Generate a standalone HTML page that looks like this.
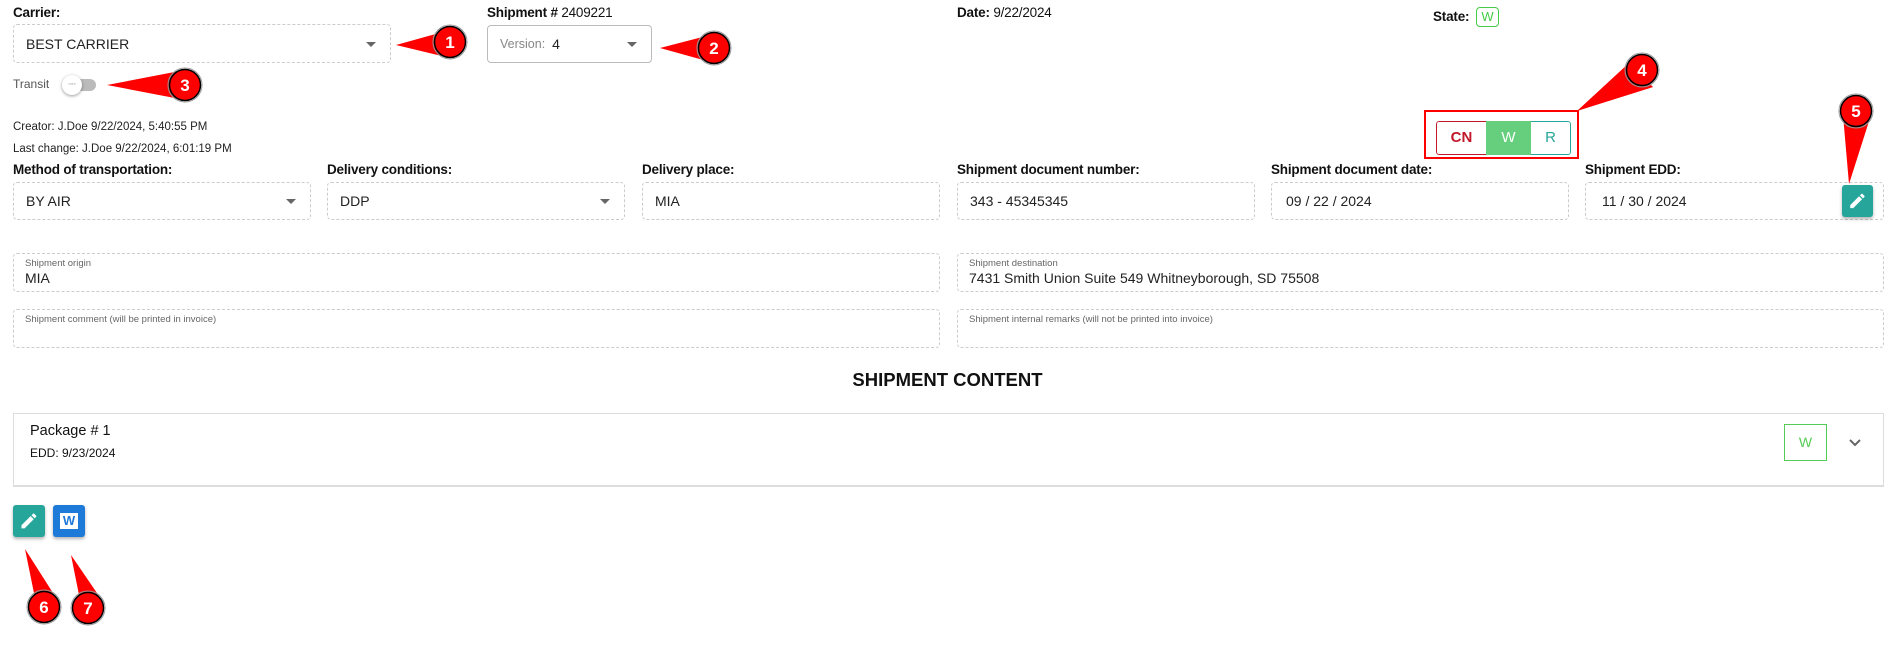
<!DOCTYPE html>
<html><head><meta charset="utf-8"><style>
*{box-sizing:border-box;margin:0;padding:0}
body{width:1899px;height:663px;background:#fff;font-family:"Liberation Sans",Arial,sans-serif;color:#222;position:relative;overflow:hidden}
.a{position:absolute}
.lbl{font-size:13.5px;font-weight:bold;color:#111;white-space:nowrap;letter-spacing:-0.2px}
.f{position:absolute;border:1px dashed #ccc;border-radius:4px;font-size:14px;color:#222;display:flex;align-items:center;padding-left:12px}
.car{position:absolute;right:14px;top:50%;margin-top:-2px;border-left:5px solid transparent;border-right:5px solid transparent;border-top:5px solid #666}
.small{font-size:11.5px;color:#222;white-space:nowrap}
.ff{position:absolute;border:1px dashed #ccc;border-radius:4px;padding:4px 11px}
.ff .t{font-size:9.5px;color:#666}
.ff .v{font-size:14px;color:#222;margin-top:1px}
</style></head><body>

<div class="a lbl" style="left:13px;top:5px">Carrier:</div>
<div class="f" style="left:13px;top:24px;width:378px;height:39px">BEST CARRIER<span class="car"></span></div>

<div class="a lbl" style="left:487px;top:5px">Shipment # <span style="font-weight:normal">2409221</span></div>
<div class="f" style="left:487px;top:25px;width:165px;height:38px;border:1px solid #bbb"><span style="font-size:12.5px;color:#888;margin-right:7px">Version:</span>4<span class="car"></span></div>

<div class="a lbl" style="left:957px;top:5px">Date: <span style="font-weight:normal">9/22/2024</span></div>
<div class="a lbl" style="left:1433px;top:9px">State:</div>
<div class="a" style="left:1476px;top:7px;width:23px;height:20px;border:1px solid #4c4;border-radius:4px;color:#4c4;font-size:13px;text-align:center;line-height:18px">W</div>

<div class="a" style="left:13px;top:77px;font-size:12px;color:#555">Transit</div>
<div class="a" style="left:66px;top:79px;width:30px;height:12px;border-radius:6px;background:#bbb"></div>
<div class="a" style="left:62px;top:75px;width:20px;height:20px;border-radius:50%;background:#fff;box-shadow:0 1px 3px rgba(0,0,0,.4);font-size:7px;color:#888;text-align:center;line-height:20px">◦◦◦</div>

<div class="a small" style="left:13px;top:121px">Creator: J.Doe 9/22/2024, 5:40:55 PM</div>
<div class="a small" style="left:13px;top:143px">Last change: J.Doe 9/22/2024, 6:01:19 PM</div>

<div class="a" style="left:1424px;top:110px;width:155px;height:49px;border:2px solid #f00"></div>
<div class="a" style="left:1436px;top:121px;width:135px;height:34px;border-radius:3px;display:flex;font-size:15px;font-weight:bold;overflow:hidden">
 <div style="width:50px;border:1px solid #c0182a;border-right:none;border-radius:3px 0 0 3px;color:#c0182a;text-align:center;line-height:32px">CN</div>
 <div style="width:45px;background:#66cf7e;color:#fff;text-align:center;line-height:34px;font-weight:normal">W</div>
 <div style="width:40px;border:1px solid #26a69a;border-left:none;border-radius:0 3px 3px 0;color:#26a69a;text-align:center;line-height:32px;font-weight:normal">R</div>
</div>

<div class="a lbl" style="left:13px;top:162px">Method of transportation:</div>
<div class="a lbl" style="left:327px;top:162px">Delivery conditions:</div>
<div class="a lbl" style="left:642px;top:162px">Delivery place:</div>
<div class="a lbl" style="left:957px;top:162px">Shipment document number:</div>
<div class="a lbl" style="left:1271px;top:162px">Shipment document date:</div>
<div class="a lbl" style="left:1585px;top:162px">Shipment EDD:</div>

<div class="f" style="left:13px;top:182px;width:298px;height:38px">BY AIR<span class="car"></span></div>
<div class="f" style="left:327px;top:182px;width:298px;height:38px">DDP<span class="car"></span></div>
<div class="f" style="left:642px;top:182px;width:298px;height:38px">MIA</div>
<div class="f" style="left:957px;top:182px;width:298px;height:38px">343 - 45345345</div>
<div class="f" style="left:1271px;top:182px;width:298px;height:38px;padding-left:14px">09 / 22 / 2024</div>
<div class="f" style="left:1585px;top:182px;width:299px;height:38px;padding-left:16px">11 / 30 / 2024</div>
<div class="a" style="left:1842px;top:185px;width:31px;height:32px;background:#26a69a;border-radius:3px;box-shadow:0 2px 3px rgba(0,0,0,.3)">
<svg width="31" height="32" viewBox="0 0 24 24"><path transform="translate(4.5,4.5) scale(0.62)" d="M3 17.25V21h3.75L17.81 9.94l-3.75-3.75L3 17.25zM20.71 7.04a1 1 0 0 0 0-1.41l-2.34-2.34a1 1 0 0 0-1.41 0l-1.830 1.83 3.75 3.75 1.83-1.83z" fill="#fff"/></svg></div>

<div class="ff" style="left:13px;top:253px;width:927px;height:39px"><div class="t">Shipment origin</div><div class="v">MIA</div></div>
<div class="ff" style="left:957px;top:253px;width:927px;height:39px"><div class="t">Shipment destination</div><div class="v">7431 Smith Union Suite 549 Whitneyborough, SD 75508</div></div>
<div class="ff" style="left:13px;top:309px;width:927px;height:39px"><div class="t">Shipment comment (will be printed in invoice)</div></div>
<div class="ff" style="left:957px;top:309px;width:927px;height:39px"><div class="t">Shipment internal remarks (will not be printed into invoice)</div></div>

<div class="a" style="left:0;width:1899px;top:369px;text-align:center;font-size:18.5px;font-weight:bold;color:#111;margin-left:-2px">SHIPMENT CONTENT</div>

<div class="a" style="left:13px;top:413px;width:1871px;height:74px;border:1px solid #ddd;border-bottom:2px solid #ddd"></div>
<div class="a" style="left:30px;top:423px;font-size:14.5px;color:#111">Package # 1</div>
<div class="a" style="left:30px;top:446px;font-size:12px;color:#111">EDD: 9/23/2024</div>
<div class="a" style="left:1784px;top:424px;width:43px;height:37px;border:1px solid #5c5;color:#5c5;font-size:14px;text-align:center;line-height:35px">W</div>
<svg class="a" style="left:1847px;top:434px" width="16" height="16" viewBox="0 0 16 16"><path d="M3 6l5 5 5-5" stroke="#666" stroke-width="2" fill="none"/></svg>

<div class="a" style="left:13px;top:505px;width:32px;height:32px;background:#26a69a;border-radius:3px;box-shadow:0 2px 3px rgba(0,0,0,.3)">
<svg width="32" height="32" viewBox="0 0 24 24"><path transform="translate(4.5,4.5) scale(0.62)" d="M3 17.25V21h3.75L17.81 9.94l-3.75-3.75L3 17.25zM20.71 7.04a1 1 0 0 0 0-1.41l-2.34-2.34a1 1 0 0 0-1.41 0l-1.83 1.83 3.75 3.75 1.83-1.83z" fill="#fff"/></svg></div>
<div class="a" style="left:53px;top:505px;width:32px;height:32px;background:#1e7ad8;border-radius:3px;box-shadow:0 2px 3px rgba(0,0,0,.3)">
<div style="position:absolute;left:7px;top:8px;width:18px;height:16px;background:#fff;color:#1e7ad8;font-weight:bold;font-size:13px;text-align:center;line-height:16px">W</div></div>

<svg class="a" style="left:0;top:0" width="1899" height="663">
<g fill="#f00">
<polygon points="396,45 450,30 450,58"/>
<polygon points="660,48 714,34 714,63"/>
<polygon points="107,85 185,70 185,100"/>
<polygon points="1577,111 1629,63 1653,87"/>
<polygon points="1849,184 1843,115 1871,115"/>
<polygon points="25,549 36,603 53,593"/>
<polygon points="71,555 80,600 99,596"/>
</g>
<g font-family="Liberation Sans,Arial,sans-serif" font-weight="bold" font-size="17" fill="#fff" text-anchor="middle">
<g><circle cx="450" cy="42" r="15.5" fill="#f00" stroke="#000" stroke-width="1.5"/><circle cx="450" cy="42" r="17" fill="none" stroke="#999" stroke-width="1"/><text x="450" y="48">1</text></g>
<g><circle cx="714" cy="48" r="15.5" fill="#f00" stroke="#000" stroke-width="1.5"/><circle cx="714" cy="48" r="17" fill="none" stroke="#999" stroke-width="1"/><text x="714" y="54">2</text></g>
<g><circle cx="185" cy="85" r="15.5" fill="#f00" stroke="#000" stroke-width="1.5"/><circle cx="185" cy="85" r="17" fill="none" stroke="#999" stroke-width="1"/><text x="185" y="91">3</text></g>
<g><circle cx="1642" cy="70" r="15.5" fill="#f00" stroke="#000" stroke-width="1.5"/><circle cx="1642" cy="70" r="17" fill="none" stroke="#999" stroke-width="1"/><text x="1642" y="76">4</text></g>
<g><circle cx="1856" cy="111" r="15.5" fill="#f00" stroke="#000" stroke-width="1.5"/><circle cx="1856" cy="111" r="17" fill="none" stroke="#999" stroke-width="1"/><text x="1856" y="117">5</text></g>
<g><circle cx="44" cy="607" r="15.5" fill="#f00" stroke="#000" stroke-width="1.5"/><circle cx="44" cy="607" r="17" fill="none" stroke="#999" stroke-width="1"/><text x="44" y="613">6</text></g>
<g><circle cx="88" cy="608" r="15.5" fill="#f00" stroke="#000" stroke-width="1.5"/><circle cx="88" cy="608" r="17" fill="none" stroke="#999" stroke-width="1"/><text x="88" y="614">7</text></g>
</g>
</svg>
</body></html>
